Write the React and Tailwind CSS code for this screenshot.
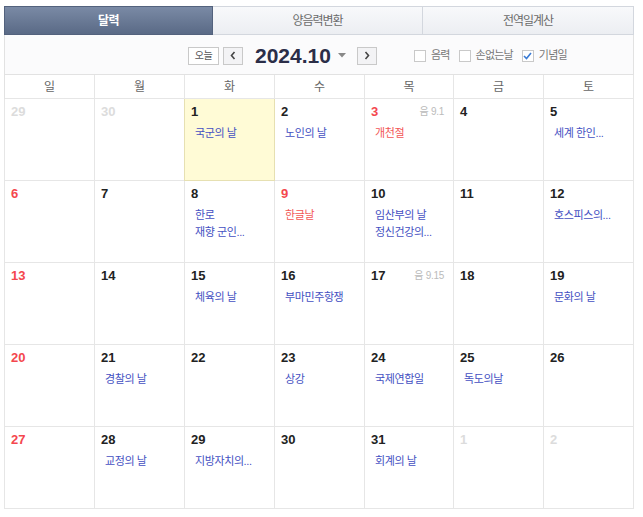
import React from "react";

const weeks = [
  [
    { d: 29, o: true },
    { d: 30, o: true },
    { d: 1, today: true, ev: ["국군의 날"] },
    { d: 2, ev: ["노인의 날"] },
    { d: 3, red: true, lunar: "음 9.1", ev: ["개천절"], evRed: true },
    { d: 4 },
    { d: 5, ev: ["세계 한인..."] },
  ],
  [
    { d: 6 },
    { d: 7 },
    { d: 8, ev: ["한로", "재향 군인..."] },
    { d: 9, red: true, ev: ["한글날"], evRed: true },
    { d: 10, ev: ["임산부의 날", "정신건강의..."] },
    { d: 11 },
    { d: 12, ev: ["호스피스의..."] },
  ],
  [
    { d: 13 },
    { d: 14 },
    { d: 15, ev: ["체육의 날"] },
    { d: 16, ev: ["부마민주항쟁"] },
    { d: 17, lunar: "음 9.15" },
    { d: 18 },
    { d: 19, ev: ["문화의 날"] },
  ],
  [
    { d: 20 },
    { d: 21, ev: ["경찰의 날"] },
    { d: 22 },
    { d: 23, ev: ["상강"] },
    { d: 24, ev: ["국제연합일"] },
    { d: 25, ev: ["독도의날"] },
    { d: 26 },
  ],
  [
    { d: 27 },
    { d: 28, ev: ["교정의 날"] },
    { d: 29, ev: ["지방자치의..."] },
    { d: 30 },
    { d: 31, ev: ["회계의 날"] },
    { d: 1, o: true },
    { d: 2, o: true },
  ],
];

const dayNames = ["일", "월", "화", "수", "목", "금", "토"];
const cols = "grid grid-cols-[90px_90px_90px_90px_89px_90px_90px]";

function Checkbox({ checked, label }) {
  return (
    <div className="flex items-center gap-[5px]">
      <div className="w-[12px] h-[12px] border border-[#c9c9c9] bg-white flex items-center justify-center">
        {checked && (
          <svg width="9" height="8" viewBox="0 0 9 8">
            <path d="M1 4 L3.5 6.5 L8 1" fill="none" stroke="#3a7bd5" strokeWidth="1.6" />
          </svg>
        )}
      </div>
      <span className="text-[11px] text-[#777] tracking-[-0.8px]">{label}</span>
    </div>
  );
}

function Cell({ c, col }) {
  let numColor = "text-[#222]";
  if (c.o) numColor = "text-[#dcdcdc]";
  else if (col === 0 || c.red) numColor = "text-[#f4474e]";
  const base = "h-[82px] border-r border-b relative";
  const cls = c.today
    ? `${base} bg-[#fffbd6] border-[#e6e0b2] shadow-[-1px_0_0_#e6e0b2]`
    : `${base} bg-white border-[#e6e6e6]`;
  return (
    <div className={cls}>
      <div className="flex items-start justify-between pl-[6px] pr-[9px] pt-[5px]">
        <span className={`text-[13px] font-bold leading-[16px] ${numColor}`}>{c.d}</span>
        {c.lunar && (
          <span className="text-[10px] leading-[16px] text-[#bbbbbb] tracking-[-0.3px]">{c.lunar}</span>
        )}
      </div>
      {c.ev && (
        <div className="pl-[10px] mt-[5px]">
          {c.ev.map((e, i) => (
            <div
              key={i}
              className={`text-[11px] leading-[17px] whitespace-nowrap tracking-[-0.4px] ${
                c.evRed ? "text-[#f25656]" : "text-[#4450c2]"
              }`}
            >
              {e}
            </div>
          ))}
        </div>
      )}
    </div>
  );
}

export default function App() {
  return (
    <div
      className="w-[643px] h-[517px] bg-white pt-[6px] pl-[4px]"
      style={{ fontFamily: '"Liberation Sans", "Noto Sans CJK KR", sans-serif' }}
    >
      <div className="w-[630px]">
        {/* Tabs */}
        <div className="flex h-[29px]">
          <div className="w-[209px] flex items-center justify-center bg-gradient-to-b from-[#7a8aa5] to-[#5a6a86] border border-[#53627d] text-white text-[12px] font-bold tracking-[-0.5px]">
            달력
          </div>
          <div className="w-[210px] flex items-center justify-center bg-gradient-to-b from-[#f8f9fb] to-[#eceef2] border-y border-r border-[#d3d7de] text-[#6b6b6b] text-[12px] tracking-[-1px]">
            양음력변환
          </div>
          <div className="w-[211px] flex items-center justify-center bg-gradient-to-b from-[#f8f9fb] to-[#eceef2] border-y border-r border-[#d3d7de] text-[#6b6b6b] text-[12px] tracking-[-1px]">
            전역일계산
          </div>
        </div>

        {/* Controls */}
        <div className="h-[40px] bg-[#fbfbfc] border-x border-b border-[#e2e2e2] flex items-center pl-[183px] pt-[2px]">
          <div className="w-[31px] h-[18px] border border-[#c9c9c9] bg-white flex items-center justify-center text-[10px] text-[#555] tracking-[-0.5px]">
            오늘
          </div>
          <div className="ml-[4px] w-[20px] h-[18px] border border-[#c9c9c9] bg-[#f3f3f5] flex items-center justify-center">
            <svg width="6" height="9" viewBox="0 0 6 9">
              <path d="M4.5 1 L1.5 4.5 L4.5 8" fill="none" stroke="#444" strokeWidth="1.6" />
            </svg>
          </div>
          <span className="ml-[12px] text-[21px] font-bold text-[#2b2e48] leading-none">2024.10</span>
          <svg className="ml-[7px]" width="8" height="5" viewBox="0 0 8 5">
            <path d="M0 0 L8 0 L4 4.5 Z" fill="#888" />
          </svg>
          <div className="ml-[11px] w-[20px] h-[18px] border border-[#c9c9c9] bg-[#f3f3f5] flex items-center justify-center">
            <svg width="6" height="9" viewBox="0 0 6 9">
              <path d="M1.5 1 L4.5 4.5 L1.5 8" fill="none" stroke="#444" strokeWidth="1.6" />
            </svg>
          </div>
          <div className="ml-[37px] flex items-center gap-[9px]">
            <Checkbox label="음력" />
            <Checkbox label="손없는날" />
            <Checkbox label="기념일" checked />
          </div>
        </div>

        {/* Day names */}
        <div className={`${cols} border-l border-[#e2e2e2]`}>
          {dayNames.map((n) => (
            <div
              key={n}
              className="h-[24px] border-r border-b border-[#e6e6e6] bg-white flex items-center justify-center text-[12px] text-[#666]"
            >
              {n}
            </div>
          ))}
        </div>

        {/* Weeks */}
        <div className={`${cols} border-l border-[#e6e6e6]`}>
          {weeks.map((w, wi) =>
            w.map((c, ci) => <Cell key={`${wi}-${ci}`} c={c} col={ci} />)
          )}
        </div>
      </div>
    </div>
  );
}
